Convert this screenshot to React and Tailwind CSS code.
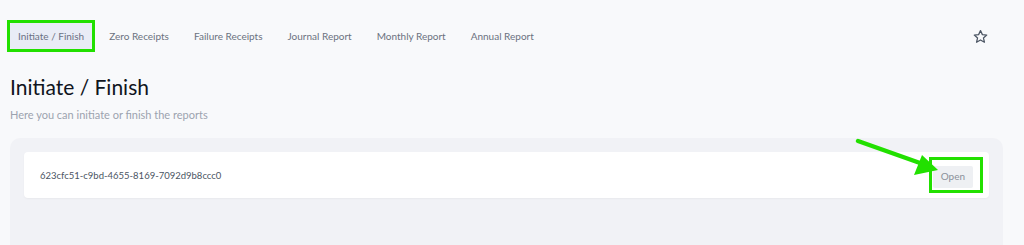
import React from "react";

const tabs = ["Initiate / Finish", "Zero Receipts", "Failure Receipts", "Journal Report", "Monthly Report", "Annual Report"];

export default function App() {
  return (
    <div className="relative w-[1024px] h-[245px] overflow-hidden bg-[#f8f9fb]" style={{ fontFamily: "Lato, 'Open Sans', sans-serif" }}>
      <div className="flex items-center justify-between pl-[10px] pr-[36px] pt-[23px]">
        <div className="flex items-center gap-[9px]">
          {tabs.map((t, i) => (
            <div key={t} className={"relative h-[26px] px-2 flex items-center text-[10px] rounded-[2px] " + (i === 0 ? "bg-[#e9ecf6] text-[#6b7184]" : "text-[#6b7280]")}>
              {t}
              {i === 0 && <div className="absolute -left-[3px] -right-[3px] -top-[3px] -bottom-[3px] border-[3px] border-[#22e000]" />}
            </div>
          ))}
        </div>
        <svg width="15" height="15" viewBox="0 0 24 24" fill="none" stroke="#4b5563" strokeWidth="2" strokeLinejoin="round">
          <polygon points="12,2.5 15,9 22,9.7 16.7,14.3 18.3,21.2 12,17.6 5.7,21.2 7.3,14.3 2,9.7 9,9" />
        </svg>
      </div>
      <div className="pl-[10px] pr-[21px]">
        <h1 className="mt-[24px] text-[21px] leading-[28px] text-[#0f1420]">Initiate / Finish</h1>
        <p className="mt-[6px] text-[11px] leading-[16px] text-[#9ca3af]">Here you can initiate or finish the reports</p>
        <div className="mt-[15px] h-[120px] rounded-[10px] bg-[#f1f2f6] px-[14px] pt-[14px]">
          <div className="h-[46px] rounded-[4px] bg-white shadow-[0_1px_2px_rgba(0,0,0,0.04)] flex items-center justify-between pl-[16px] pr-[16px]">
            <span className="pt-[2px] text-[9.5px] text-[#4b5563]">623cfc51-c9bd-4655-8169-7092d9b8ccc0</span>
            <div className="relative">
              <button className="h-[22px] px-[8px] bg-[#eef0f3] text-[10px] text-[#8b909a] rounded-[2px]">Open</button>
              <div className="absolute -left-[4px] -right-[10px] -top-[5px] -bottom-[5px] border-[3px] border-[#22e000]" />
            </div>
          </div>
        </div>
      </div>
      <svg className="absolute left-0 top-0" width="1024" height="245" viewBox="0 0 1024 245">
        <line x1="858" y1="141" x2="920" y2="163" stroke="#22e000" strokeWidth="4.5" strokeLinecap="round" />
        <polygon points="938,170 914,175 922,155" fill="#22e000" />
      </svg>
    </div>
  );
}
